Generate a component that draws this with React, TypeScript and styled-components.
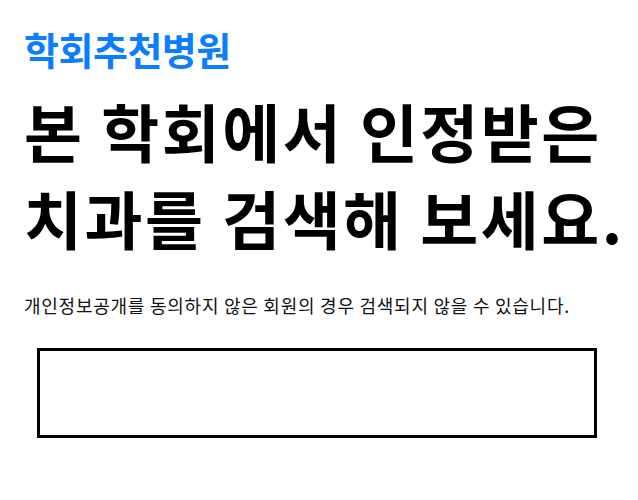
import React from "react";
import styled, { createGlobalStyle } from "styled-components";

const GlobalStyle = createGlobalStyle`
  html, body {
    margin: 0;
    padding: 0;
    background: #fff;
  }
  body {
    font-family: "Noto Sans CJK KR", "Noto Sans", sans-serif;
    color: #000;
  }
`;

const Page = styled.div`
  width: 638px;
  padding: 25px 24px 0 24px;
  box-sizing: border-box;
`;

const Brand = styled.h2`
  margin: 0;
  font-size: 38px;
  font-weight: 700;
  line-height: 48px;
  color: #0b7dff;
  letter-spacing: -0.5px;
`;

const Headline = styled.h1`
  margin: 13px 0 0 0;
  font-size: 63px;
  font-weight: 700;
  line-height: 87px;
  letter-spacing: 2.5px;
  white-space: nowrap;
  color: #000;
`;

const Notice = styled.p`
  margin: 32px 0 0 0;
  font-size: 18px;
  font-weight: 400;
  line-height: 26px;
  color: #111;
  letter-spacing: 0.75px;
  white-space: nowrap;
`;

const SearchBox = styled.div`
  margin: 30px 0 0 13px;
  width: 560px;
  height: 90px;
  box-sizing: border-box;
  border: 3px solid #000;
`;

export default function App() {
  return (
    <>
      <GlobalStyle />
      <Page>
        <Brand>학회추천병원</Brand>
        <Headline>
          본 학회에서 인정받은
          <br />
          치과를 검색해 보세요.
        </Headline>
        <Notice>개인정보공개를 동의하지 않은 회원의 경우 검색되지 않을 수 있습니다.</Notice>
        <SearchBox />
      </Page>
    </>
  );
}
